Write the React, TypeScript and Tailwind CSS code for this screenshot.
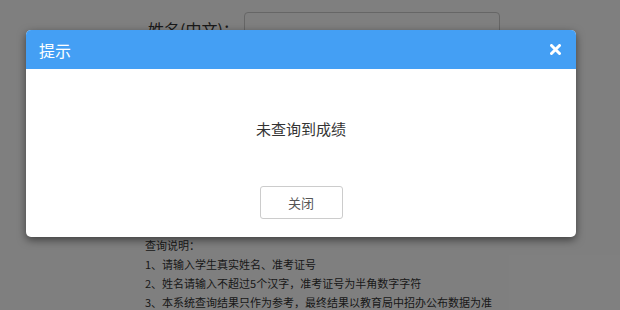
import React from 'react';

const font = "font-['Microsoft_YaHei','Noto_Sans_CJK_SC','Noto_Sans',sans-serif]";

export default function App() {
  return (
    <div className={`relative h-[310px] w-[620px] overflow-hidden bg-white ${font}`}>
      {/* page behind the dialog */}
      <div className="pl-[148px] pt-3">
        <div className="flex items-center">
          <label className="w-[96px] text-[16px] text-[#333]">姓名(中文)：</label>
          <div className="h-[34px] w-[256px] rounded border border-[#ccc]" />
        </div>
      </div>
      <div className="mt-[190px] pl-[145px] text-[11px] leading-[19px] text-[#333]">
        <p>查询说明：</p>
        <p>1、请输入学生真实姓名、准考证号</p>
        <p>2、姓名请输入不超过5个汉字，准考证号为半角数字字符</p>
        <p>3、本系统查询结果只作为参考，最终结果以教育局中招办公布数据为准</p>
      </div>

      {/* backdrop */}
      <div className="absolute inset-0 bg-black/50" />

      {/* dialog */}
      <div className="absolute left-[26px] top-[30px] w-[550px] overflow-hidden rounded-[5px] bg-white shadow-[0_3px_9px_rgba(0,0,0,0.5)]">
        <div className="flex h-[39px] items-center justify-between bg-[#449ff4] pl-[13px] pr-[15px]">
          <span className="text-[16px] text-white">提示</span>
          <svg width="11" height="11" viewBox="0 0 11 11">
            <path d="M1.5 1.5 L9.5 9.5 M9.5 1.5 L1.5 9.5" stroke="#fff" strokeWidth="3" strokeLinecap="round" />
          </svg>
        </div>
        <div className="flex flex-col items-center pb-[18px] pt-[50px]">
          <p className="text-[15px] leading-[20px] text-[#333]">未查询到成绩</p>
          <button className="mt-[47px] h-[33px] w-[83px] rounded-[3px] border border-[#ccc] bg-white text-[13px] text-[#555]">
            关闭
          </button>
        </div>
      </div>
    </div>
  );
}
